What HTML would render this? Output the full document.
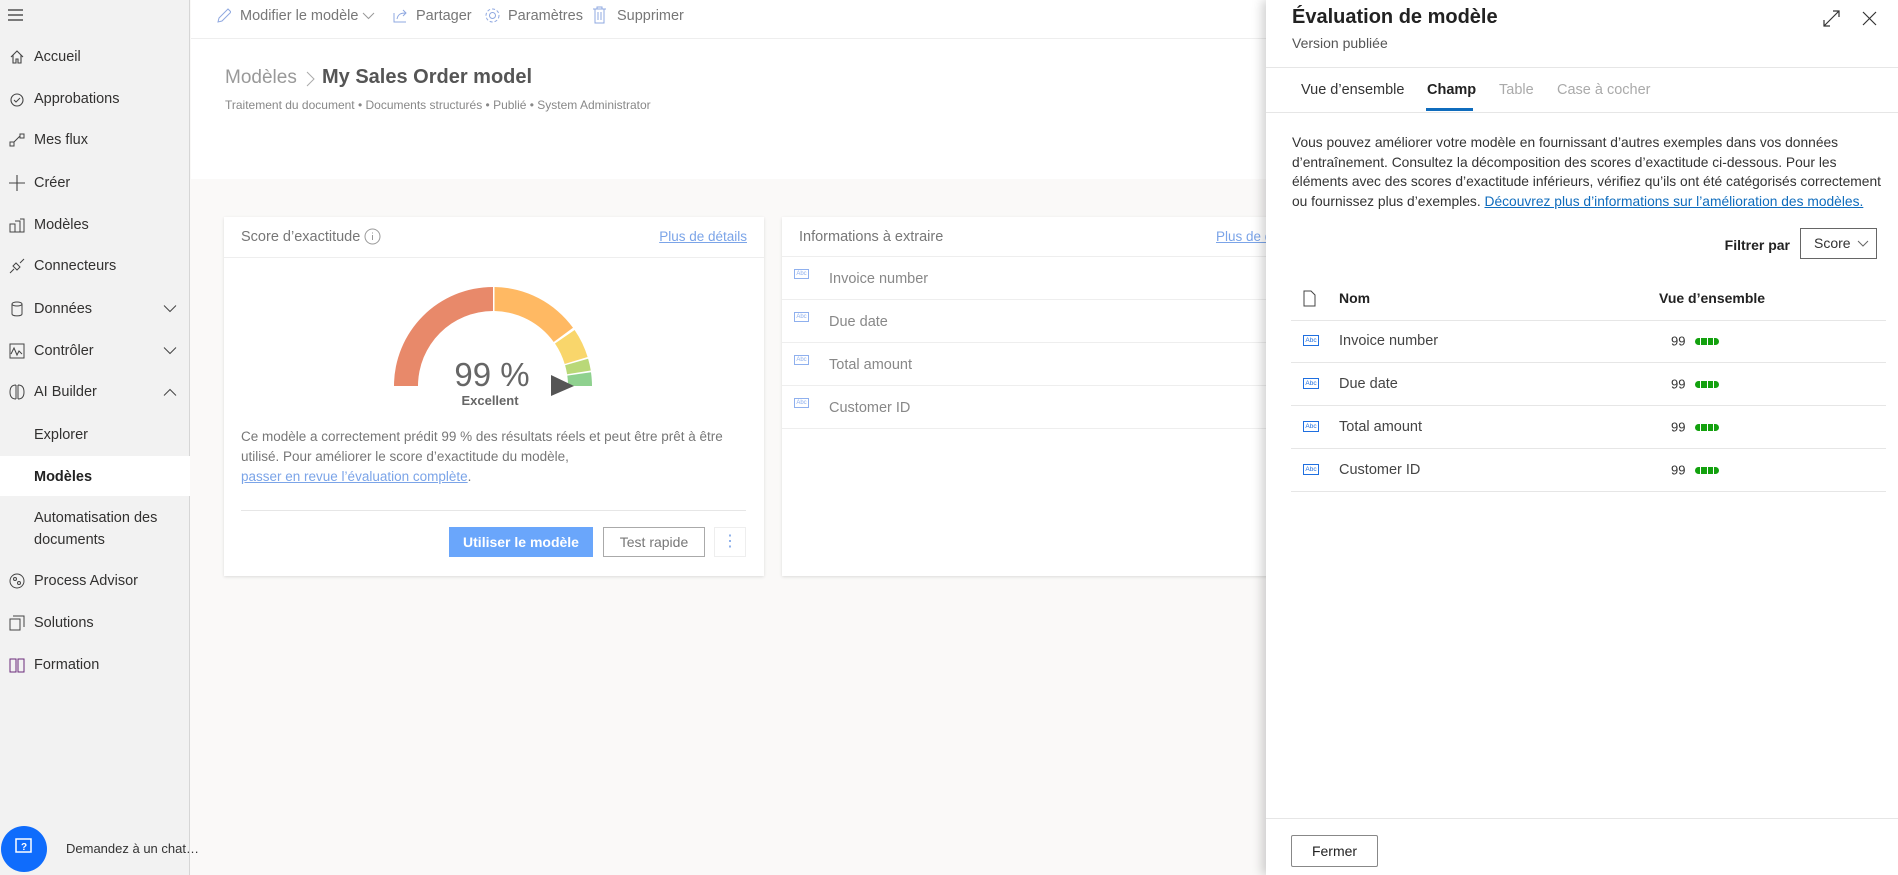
<!DOCTYPE html>
<html><head><meta charset="utf-8">
<style>
*{margin:0;padding:0;box-sizing:border-box}
body{width:1898px;height:875px;overflow:hidden;position:relative;font-family:"Liberation Sans",sans-serif;background:#faf9f8;color:#333}
.a{position:absolute;white-space:nowrap}
#side{position:absolute;left:0;top:0;width:190px;height:875px;background:#f2f2f2;border-right:1px solid #d6d6d6}
.si{position:absolute;left:34px;font-size:14.5px;color:#323130;transform:translateY(-50%)}
.ic{position:absolute;left:8px;transform:translateY(-50%)}
.chev{position:absolute;left:163px;transform:translateY(-50%)}
#hdr{position:absolute;left:191px;top:0;width:1100px;height:179px;background:#fff}
.tb{position:absolute;top:16px;transform:translateY(-50%);font-size:14.5px;color:#777}
.card{position:absolute;background:#fff;box-shadow:0 1px 3px rgba(0,0,0,.12)}
.lnk{color:#7ba4e8;text-decoration:underline}
.row2{position:absolute;left:0;right:0;height:43px;border-bottom:1px solid #eee}
.abc{position:absolute;width:15px;height:10px;border:1px solid #8fb0ee;font-size:6px;color:#8fb0ee;line-height:8px;text-align:center;font-family:"Liberation Sans",sans-serif}
#panel{position:absolute;left:1266px;top:0;width:632px;height:875px;background:#fff;box-shadow:-4px 0 10px rgba(0,0,0,.18)}
.pr{position:absolute;left:25px;width:595px;height:43px;border-bottom:1px solid #e6e6e6}
.pabc{position:absolute;left:12px;top:15px;width:16px;height:11px;border:1px solid #1f6fe0;font-size:6.5px;color:#1f6fe0;line-height:9px;text-align:center}
.pn{position:absolute;left:48px;top:50%;transform:translateY(-50%);font-size:14.5px;color:#444}
.p99{position:absolute;left:380px;top:50%;transform:translateY(-50%);font-size:13px;color:#333}
.bar{position:absolute;left:404px;top:18px;width:24px;height:7px;display:flex;gap:1px}
.bar i{flex:1;background:#13a10e}
.bar i:first-child{border-radius:4px 0 0 4px}.bar i:last-child{border-radius:0 4px 4px 0}
</style></head><body>

<div id="side">
  <svg class="a" style="left:8px;top:9px" width="16" height="12"><path d="M0 1h15M0 6h15M0 11h15" stroke="#333" stroke-width="1.2"/></svg>
  <svg class="ic" style="top:57px" width="18" height="18"><path d="M3 9L9 3l6 6M5 7v8h3v-4h2v4h3V7" fill="none" stroke="#444" stroke-width="1.1"/></svg><div class="si" style="top:57px">Accueil</div>
  <svg class="ic" style="top:99px" width="18" height="18"><circle cx="9" cy="10" r="6" fill="none" stroke="#444" stroke-width="1.1"/><path d="M6 10l2 2 4-4" fill="none" stroke="#444"/></svg><div class="si" style="top:99px">Approbations</div>
  <svg class="ic" style="top:140px" width="18" height="18"><rect x="2" y="11" width="4" height="4" fill="none" stroke="#444"/><rect x="12" y="3" width="4" height="4" fill="none" stroke="#444"/><path d="M6 11l6-6" stroke="#444"/></svg><div class="si" style="top:140px">Mes flux</div>
  <svg class="ic" style="top:183px" width="18" height="18"><path d="M9 1v16M1 9h16" stroke="#444" stroke-width="1.1"/></svg><div class="si" style="top:183px">Créer</div>
  <svg class="ic" style="top:225px" width="18" height="18"><path d="M2 8h5v8H2zM7 5h5v11H7M12 3h4v13h-4" fill="none" stroke="#444"/></svg><div class="si" style="top:225px">Modèles</div>
  <svg class="ic" style="top:266px" width="18" height="18"><path d="M2 16l4-4M12 6l4-4M5 9l4 4 3-3-4-4z" fill="none" stroke="#444"/></svg><div class="si" style="top:266px">Connecteurs</div>
  <svg class="ic" style="top:309px" width="18" height="18"><ellipse cx="9" cy="4" rx="5" ry="2" fill="none" stroke="#444"/><path d="M4 4v10c0 2.5 10 2.5 10 0V4" fill="none" stroke="#444"/></svg><div class="si" style="top:309px">Données</div>
  <svg class="chev" style="top:309px" width="14" height="9"><path d="M1 1l6 6 6-6" fill="none" stroke="#444"/></svg>
  <svg class="ic" style="top:351px" width="18" height="18"><rect x="2" y="2" width="14" height="14" fill="none" stroke="#444"/><path d="M3 12l3-6 3 7 2-4 3 3" fill="none" stroke="#444"/></svg><div class="si" style="top:351px">Contrôler</div>
  <svg class="chev" style="top:351px" width="14" height="9"><path d="M1 1l6 6 6-6" fill="none" stroke="#444"/></svg>
  <svg class="ic" style="top:392px" width="18" height="18"><path d="M8 2C3 2 2 6 2 9s1 7 6 7M10 2c5 0 6 4 6 7s-1 7-6 7M8 2v14M10 2v14" fill="none" stroke="#444"/></svg><div class="si" style="top:392px">AI Builder</div>
  <svg class="chev" style="top:392px" width="14" height="9"><path d="M1 8l6-6 6 6" fill="none" stroke="#444"/></svg>
  <div class="si" style="top:435px">Explorer</div>
  <div class="a" style="left:0;top:456px;width:190px;height:40px;background:#fff"></div>
  <div class="si" style="top:477px;font-weight:bold;color:#222">Modèles</div>
  <div class="si" style="top:529px;white-space:normal;line-height:22px;width:140px">Automatisation des documents</div>
  <svg class="ic" style="top:581px" width="18" height="18"><circle cx="9" cy="9" r="7" fill="none" stroke="#444"/><circle cx="7" cy="7" r="1.5" fill="none" stroke="#444"/><circle cx="11" cy="11" r="1.5" fill="none" stroke="#444"/></svg><div class="si" style="top:581px">Process Advisor</div>
  <svg class="ic" style="top:623px" width="18" height="18"><path d="M2 5h10v11H2zM5 2h11v11" fill="none" stroke="#444"/></svg><div class="si" style="top:623px">Solutions</div>
  <svg class="ic" style="top:665px" width="18" height="18"><path d="M2 3h6v13H2zM10 3h6v13h-6z" fill="none" stroke="#6b2a7a"/></svg><div class="si" style="top:665px">Formation</div>
  <div class="a" style="left:1px;top:826px;width:46px;height:46px;border-radius:50%;background:#0f6cfc"></div>
  <svg class="a" style="left:15px;top:838px" width="18" height="20"><rect x="1" y="1" width="15" height="13" fill="none" stroke="#fff" stroke-width="1.5"/><text x="6" y="12" font-size="10" fill="#fff" font-weight="bold" font-family="Liberation Sans">?</text></svg>
  <div class="a" style="left:66px;top:841px;font-size:13px;color:#333">Demandez à un chat…</div>
</div>

<div id="hdr">
  <div class="a" style="left:0;top:38px;width:1100px;height:1px;background:#eee"></div>
</div>
<svg class="a" style="left:215px;top:7px" width="16" height="18"><path d="M3 15l1-4 9-9 3 3-9 9z" fill="none" stroke="#8fa8e0"/></svg>
<div class="tb" style="left:240px">Modifier le modèle</div>
<svg class="a" style="left:362px;top:12px" width="13" height="8"><path d="M1 1l5.5 5.5L12 1" fill="none" stroke="#999"/></svg>
<svg class="a" style="left:392px;top:7px" width="17" height="17"><path d="M2 6v9h12M5 12c1-5 4-6 9-6M11 3l3 3-3 3" fill="none" stroke="#8fa8e0"/></svg>
<div class="tb" style="left:416px">Partager</div>
<svg class="a" style="left:484px;top:7px" width="17" height="17"><circle cx="8.5" cy="8.5" r="3" fill="none" stroke="#8fa8e0"/><circle cx="8.5" cy="8.5" r="6.5" fill="none" stroke="#8fa8e0" stroke-dasharray="3 2"/></svg>
<div class="tb" style="left:508px">Paramètres</div>
<svg class="a" style="left:592px;top:6px" width="15" height="18"><path d="M1 3h13M5 3V1h5v2M3 3v14h9V3M6 6v8M9 6v8" fill="none" stroke="#8fa8e0"/></svg>
<div class="tb" style="left:617px">Supprimer</div>

<div class="a" style="left:225px;top:67px;font-size:19px;color:#999">Modèles</div>
<svg class="a" style="left:306px;top:71px" width="9" height="16"><path d="M1 1l7 7-7 7" fill="none" stroke="#aaa"/></svg>
<div class="a" style="left:322px;top:66px;font-size:20px;color:#555;font-weight:bold">My Sales Order model</div>
<div class="a" style="left:225px;top:98px;font-size:12px;color:#888">Traitement du document • Documents structurés • Publié • System Administrator</div>

<div class="card" style="left:224px;top:217px;width:540px;height:359px">
  <div class="a" style="left:17px;top:12px;font-size:14.5px;color:#777">Score d’exactitude</div>
  <svg class="a" style="left:140px;top:11px" width="17" height="17"><circle cx="8.5" cy="8.5" r="7.5" fill="none" stroke="#999"/><path d="M8.5 7v5M8.5 4.5v1" stroke="#999"/></svg>
  <div class="a lnk" style="right:17px;top:12px;font-size:13.5px">Plus de détails</div>
  <div class="a" style="left:0;top:40px;width:540px;height:1px;background:#eee"></div>
  <svg class="a" style="left:159px;top:65px" width="220" height="120" viewBox="0 0 220 120">
    <g transform="translate(110,104)">
      <path d="M-99 0A99 99 0 0 1 0 -99L0 -75A75 75 0 0 0 -75 0Z" fill="#e8896a"/>
      <path d="M1.5 -99A99 99 0 0 1 80 -58.2L60.7 -44A75 75 0 0 0 1.5 -75Z" fill="#ffb963"/>
      <path d="M81.6 -56A99 99 0 0 1 94.6 -29L71.7 -22A75 75 0 0 0 62 -42.5Z" fill="#f9d66b"/>
      <path d="M95.1 -27.3A99 99 0 0 1 97.8 -15.5L74.1 -11.7A75 75 0 0 0 72.1 -20.7Z" fill="#b9d878"/>
      <path d="M98 -13.8A99 99 0 0 1 99 0L75 0A75 75 0 0 0 74.3 -10.4Z" fill="#8fd18f"/>
    </g>
  </svg>
  <div class="a" style="left:198px;top:139px;width:140px;text-align:center;font-size:33px;color:#666">99 %</div>
  <div class="a" style="left:196px;top:176px;width:140px;text-align:center;font-size:13px;color:#666;font-weight:bold">Excellent</div>
  <svg class="a" style="left:327px;top:158px" width="24" height="22"><path d="M0 0L23 11L0 21z" fill="#555"/></svg>
  <div class="a" style="left:17px;top:210px;width:515px;white-space:normal;font-size:13.5px;line-height:20px;color:#777">Ce modèle a correctement prédit 99 % des résultats réels et peut être prêt à être utilisé. Pour améliorer le score d’exactitude du modèle,<br><span class="lnk">passer en revue l’évaluation complète</span>.</div>
  <div class="a" style="left:17px;top:293px;width:505px;height:1px;background:#e6e6e6"></div>
  <div class="a" style="left:225px;top:310px;width:144px;height:30px;background:#6aa6fb;color:#fff;font-size:14px;font-weight:bold;text-align:center;line-height:30px">Utiliser le modèle</div>
  <div class="a" style="left:379px;top:310px;width:102px;height:30px;border:1px solid #aaa;color:#777;font-size:14px;text-align:center;line-height:28px">Test rapide</div>
  <div class="a" style="left:490px;top:310px;width:32px;height:30px;border:1px solid #eee;color:#7ba4e8;font-size:16px;text-align:center;line-height:28px">⋮</div>
</div>

<div class="card" style="left:782px;top:217px;width:520px;height:359px">
  <div class="a" style="left:17px;top:12px;font-size:14.5px;color:#777">Informations à extraire</div>
  <div class="a lnk" style="left:434px;top:12px;font-size:13.5px">Plus de détails</div>
  <div class="a" style="left:0;top:39px;width:520px;height:1px;background:#eee"></div>
  <div class="row2" style="top:40px"><div class="abc" style="left:12px;top:12px">Abc</div><div class="a" style="left:47px;top:14px;font-size:14.5px;color:#888">Invoice number</div></div>
  <div class="row2" style="top:83px"><div class="abc" style="left:12px;top:12px">Abc</div><div class="a" style="left:47px;top:14px;font-size:14.5px;color:#888">Due date</div></div>
  <div class="row2" style="top:126px"><div class="abc" style="left:12px;top:12px">Abc</div><div class="a" style="left:47px;top:14px;font-size:14.5px;color:#888">Total amount</div></div>
  <div class="row2" style="top:169px"><div class="abc" style="left:12px;top:12px">Abc</div><div class="a" style="left:47px;top:14px;font-size:14.5px;color:#888">Customer ID</div></div>
</div>

<div id="panel">
  <div class="a" style="left:26px;top:6px;font-size:20px;color:#222;font-weight:bold">Évaluation de modèle</div>
  <div class="a" style="left:26px;top:35px;font-size:14px;color:#555">Version publiée</div>
  <svg class="a" style="left:557px;top:10px" width="17" height="17"><path d="M1 16L16 1M10 1h6v6M1 10v6h6" fill="none" stroke="#333" stroke-width="1.2"/></svg>
  <svg class="a" style="left:596px;top:11px" width="15" height="15"><path d="M1 1l13 13M14 1L1 14" stroke="#333" stroke-width="1.2"/></svg>
  <div class="a" style="left:0;top:67px;width:632px;height:1px;background:#e6e6e6"></div>
  <div class="a" style="left:35px;top:82px;font-size:14.5px;color:#333">Vue d’ensemble</div>
  <div class="a" style="left:161px;top:82px;font-size:14.5px;color:#222;font-weight:bold">Champ</div>
  <div class="a" style="left:160px;top:108px;width:47px;height:3px;background:#0f6cbd"></div>
  <div class="a" style="left:233px;top:82px;font-size:14.5px;color:#aaa">Table</div>
  <div class="a" style="left:291px;top:82px;font-size:14.5px;color:#aaa">Case à cocher</div>
  <div class="a" style="left:0;top:112px;width:632px;height:1px;background:#e6e6e6"></div>
  <div class="a" style="left:26px;top:133px;width:600px;white-space:normal;font-size:13.8px;line-height:19.6px;color:#333">Vous pouvez améliorer votre modèle en fournissant d’autres exemples dans vos données d’entraînement. Consultez la décomposition des scores d’exactitude ci-dessous. Pour les éléments avec des scores d’exactitude inférieurs, vérifiez qu’ils ont été catégorisés correctement ou fournissez plus d’exemples. <span style="color:#0f6cbd;text-decoration:underline">Découvrez plus d’informations sur l’amélioration des modèles.</span></div>
  <div class="a" style="right:108px;top:237px;font-size:14px;color:#222;font-weight:bold">Filtrer par</div>
  <div class="a" style="left:534px;top:228px;width:77px;height:31px;border:1px solid #666"><span class="a" style="left:13px;top:6px;font-size:14px;color:#333">Score</span><svg class="a" style="left:56px;top:11px" width="12" height="8"><path d="M1 1l5 5 5-5" fill="none" stroke="#666"/></svg></div>
  <svg class="a" style="left:37px;top:290px" width="13" height="17"><path d="M1 1h7l4 4v11H1z" fill="none" stroke="#444"/></svg>
  <div class="a" style="left:73px;top:290px;font-size:14px;color:#222;font-weight:bold">Nom</div>
  <div class="a" style="left:393px;top:290px;font-size:14px;color:#222;font-weight:bold">Vue d’ensemble</div>
  <div class="a" style="left:25px;top:320px;width:595px;height:1px;background:#e6e6e6"></div>
  <div class="pr" style="top:320px"><div class="pabc">Abc</div><div class="pn">Invoice number</div><div class="p99">99</div><div class="bar"><i></i><i></i><i></i><i></i></div></div>
  <div class="pr" style="top:363px"><div class="pabc">Abc</div><div class="pn">Due date</div><div class="p99">99</div><div class="bar"><i></i><i></i><i></i><i></i></div></div>
  <div class="pr" style="top:406px"><div class="pabc">Abc</div><div class="pn">Total amount</div><div class="p99">99</div><div class="bar"><i></i><i></i><i></i><i></i></div></div>
  <div class="pr" style="top:449px"><div class="pabc">Abc</div><div class="pn">Customer ID</div><div class="p99">99</div><div class="bar"><i></i><i></i><i></i><i></i></div></div>
  <div class="a" style="left:0;top:818px;width:632px;height:1px;background:#e6e6e6"></div>
  <div class="a" style="left:25px;top:835px;width:87px;height:32px;border:1px solid #888;border-radius:2px;font-size:14px;color:#222;text-align:center;line-height:30px">Fermer</div>
</div>
</body></html>
